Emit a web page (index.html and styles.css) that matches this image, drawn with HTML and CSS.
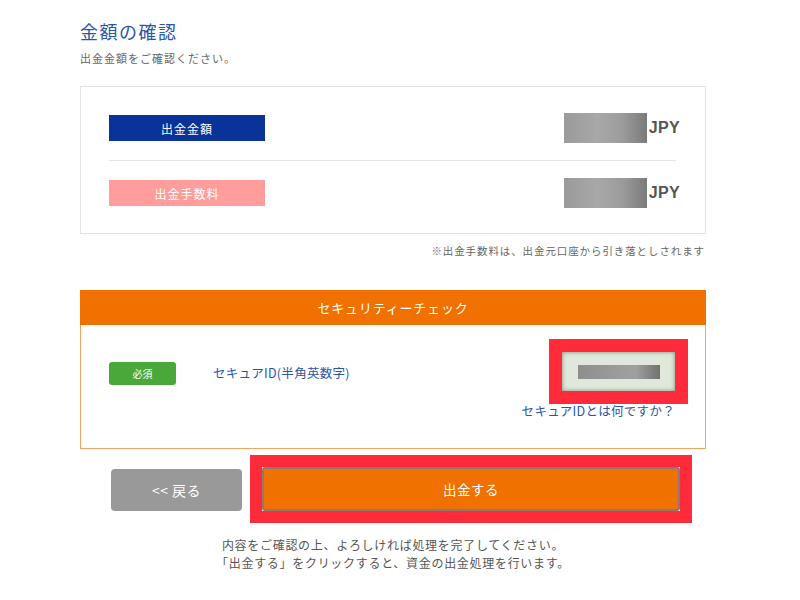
FILE: index.html
```html
<!DOCTYPE html>
<html lang="ja">
<head>
<meta charset="utf-8">
<link rel="stylesheet" href="styles.css">
</head>
<body>
<div class="page">
  <h1 class="title">金額の確認</h1>
  <p class="subtitle">出金金額をご確認ください。</p>

  <div class="amount-box">
    <div class="amount-row">
      <span class="label label-blue">出金金額</span>
      <span class="value"><span class="blur"></span><span class="cur">JPY</span></span>
    </div>
    <div class="sep"></div>
    <div class="amount-row">
      <span class="label label-pink">出金手数料</span>
      <span class="value"><span class="blur"></span><span class="cur">JPY</span></span>
    </div>
  </div>
  <p class="note">※出金手数料は、出金元口座から引き落としされます</p>

  <div class="sec">
    <div class="sec-head">セキュリティーチェック</div>
    <div class="sec-body">
      <div class="sec-row">
        <span class="badge">必須</span>
        <span class="sec-label">セキュアID(半角英数字)</span>
        <span class="hl-input"><span class="input"><span class="input-blur"></span></span></span>
      </div>
      <div class="sec-link">セキュアIDとは何ですか？</div>
    </div>
  </div>

  <div class="actions">
    <button class="btn-back">&lt;&lt; 戻る</button>
    <span class="hl-btn"><button class="btn-submit">出金する</button></span>
  </div>

  <p class="foot">内容をご確認の上、よろしければ処理を完了してください。<br>「出金する」をクリックすると、資金の出金処理を行います。</p>
</div>
</body>
</html>
```

FILE: styles.css
```css
* { box-sizing: border-box; }
body {
  margin: 0;
  background: #fff;
  font-family: "Noto Sans CJK JP", "Liberation Sans", sans-serif;
  color: #555;
}
.page {
  width: 626px;
  margin-left: 80px;
  padding-top: 20px;
}
.title {
  margin: 0;
  font-size: 18px;
  letter-spacing: 1.5px;
  line-height: 22px;
  font-weight: normal;
  color: #2a55a8;
}
.subtitle {
  margin: 8px 0 0;
  font-size: 11px;
  letter-spacing: 1px;
  line-height: 16px;
  color: #666;
}
.amount-box {
  margin-top: 20px;
  border: 1px solid #e2e2e2;
  padding: 26px 25px 25px 28px;
}
.amount-row {
  display: flex;
  align-items: center;
  justify-content: space-between;
  height: 30px;
}
.label {
  width: 156px;
  height: 26px;
  display: flex;
  align-items: center;
  justify-content: center;
  font-size: 12px;
  letter-spacing: 1px;
  color: #fff;
}
.label-blue { background: #0a3399; }
.label-pink { background: #ff9c9c; }
.value {
  display: flex;
  align-items: center;
  gap: 2px;
}
.blur {
  width: 83px;
  height: 30px;
  background: linear-gradient(90deg, #9a9a9a, #a8a8a8 40%, #9c9c9c 70%, #7a7a7a);
  filter: blur(0.6px);
}
.cur {
  font-family: "Liberation Sans", sans-serif;
  font-weight: bold;
  font-size: 16px;
  letter-spacing: 0.3px;
  color: #555;
}
.sep {
  height: 1px;
  background: #e6e6e6;
  margin: 17px 4px 17px 0;
}
.note {
  margin: 10px 1px 0 0;
  text-align: right;
  font-size: 10.5px;
  letter-spacing: 0.9px;
  line-height: 14px;
  color: #666;
}
.sec { margin-top: 32px; }
.sec-head {
  background: #f07000;
  color: #fff;
  height: 35px;
  display: flex;
  align-items: center;
  justify-content: center;
  font-size: 13px;
  letter-spacing: 0.8px;
}
.sec-body {
  border: 1px solid #f5a262;
  border-top: none;
  padding: 14px 17px 30px 28px;
}
.sec-row {
  display: flex;
  align-items: center;
  height: 65px;
}
.badge {
  width: 67px;
  height: 23px;
  border-radius: 3px;
  background: #4aa83a;
  color: #fff;
  font-size: 10px;
  display: flex;
  align-items: center;
  justify-content: center;
  margin-top: 3px;
}
.sec-label {
  margin-left: 37px;
  font-size: 12.5px;
  letter-spacing: 0.3px;
  color: #2a55a8;
  margin-top: 2px;
}
.hl-input {
  margin-left: auto;
  width: 139px;
  height: 65px;
  border: 13px solid #ff2a3a;
  display: flex;
}
.input {
  flex: 1;
  background: #dfe8da;
  box-shadow: inset 0 0 4px #7c8a78;
  display: flex;
  align-items: center;
  justify-content: center;
}
.input-blur {
  width: 82px;
  height: 14px;
  background: linear-gradient(90deg, #8e8e8e, #9c9c9c 50%, #a0a0a0 70%, #707070);
}
.sec-link {
  text-align: right;
  padding-right: 13px;
  font-size: 12.5px;
  letter-spacing: 0.3px;
  line-height: 14px;
  color: #2a55a8;
}
.actions {
  margin-top: 6px;
  padding-left: 31px;
  display: flex;
  align-items: center;
  gap: 8px;
}
.btn-back {
  width: 131px;
  height: 42px;
  border: none;
  border-radius: 4px;
  background: #999;
  color: #fff;
  font-family: inherit;
  font-size: 14px;
  letter-spacing: 0.5px;
  margin-top: 2px;
}
.hl-btn {
  display: flex;
  width: 442px;
  height: 68px;
  border: 12px solid #ff2a3a;
}
.btn-submit {
  flex: 1;
  border: 2px solid #8a7a70;
  border-radius: 3px;
  background: #f07000;
  color: #fff;
  font-family: inherit;
  font-size: 13.5px;
  letter-spacing: 0.5px;
}
.foot {
  margin: 13px 0 0;
  text-align: center;
  font-size: 12px;
  letter-spacing: 0.7px;
  line-height: 18px;
  color: #555;
}
```
